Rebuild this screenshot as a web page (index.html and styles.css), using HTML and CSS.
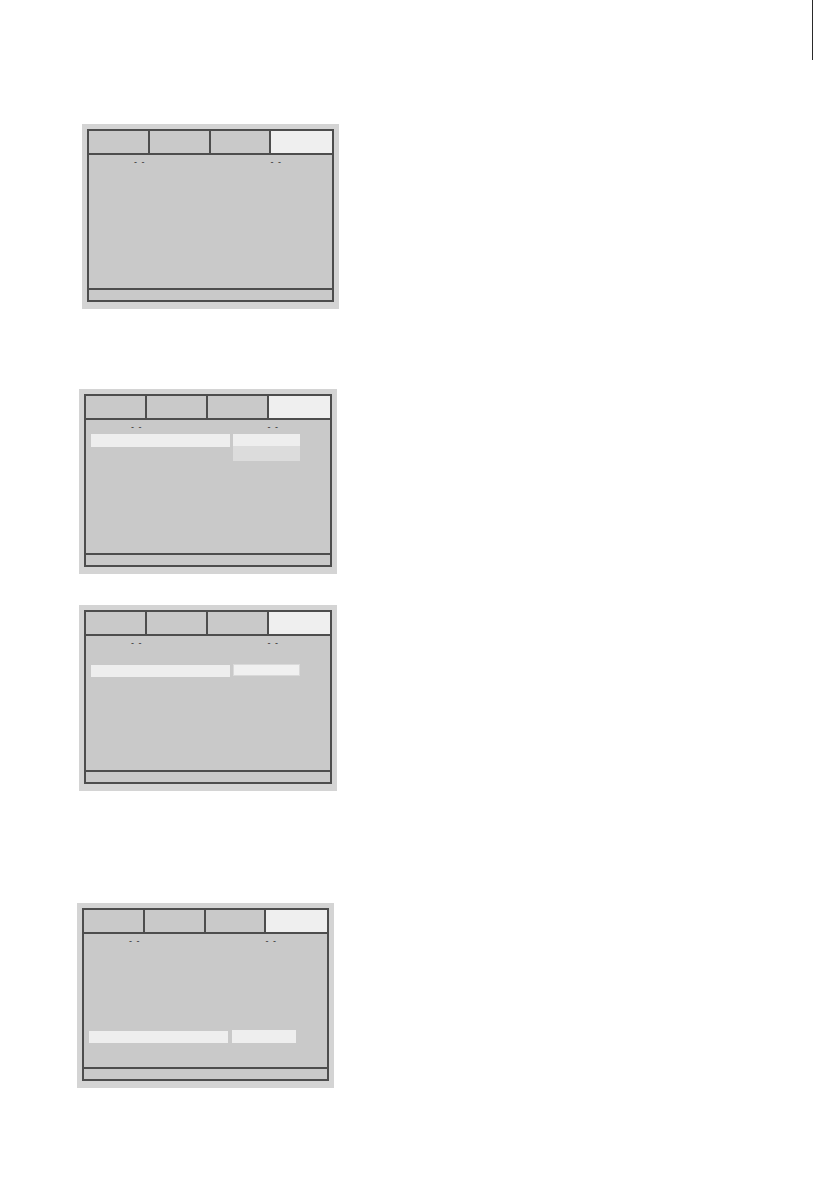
FILE: index.html
```html
<!DOCTYPE html>
<html>
<head>
<meta charset="utf-8">
<link rel="stylesheet" href="styles.css">
</head>
<body>
<div class="page">
  <div class="edge-row"><div class="edge-line"></div></div>

  <div class="screen s1">
    <div class="inner">
      <div class="tabs"><div class="tab"></div><div class="tab"></div><div class="tab"></div><div class="tab active"></div></div>
      <div class="body">
        <div class="marks"><span class="mark m1">- -</span><span class="mark m2">- -</span></div>
      </div>
      <div class="footer"></div>
    </div>
  </div>

  <div class="screen s2">
    <div class="inner">
      <div class="tabs"><div class="tab"></div><div class="tab"></div><div class="tab"></div><div class="tab active"></div></div>
      <div class="body">
        <div class="marks"><span class="mark m1">- -</span><span class="mark m2">- -</span></div>
        <div class="row r2">
          <div class="bar"></div>
          <div class="drop"><div class="opt sel"></div><div class="opt"></div></div>
        </div>
      </div>
      <div class="footer"></div>
    </div>
  </div>

  <div class="screen s3">
    <div class="inner">
      <div class="tabs"><div class="tab"></div><div class="tab"></div><div class="tab"></div><div class="tab active"></div></div>
      <div class="body">
        <div class="marks"><span class="mark m1">- -</span><span class="mark m2">- -</span></div>
        <div class="row r3">
          <div class="bar"></div>
          <div class="field outlined"></div>
        </div>
      </div>
      <div class="footer"></div>
    </div>
  </div>

  <div class="screen s4">
    <div class="inner">
      <div class="tabs"><div class="tab"></div><div class="tab"></div><div class="tab"></div><div class="tab active"></div></div>
      <div class="body">
        <div class="marks"><span class="mark m1">- -</span><span class="mark m2">- -</span></div>
        <div class="row r4">
          <div class="bar"></div>
          <div class="field tall"></div>
        </div>
      </div>
      <div class="footer"></div>
    </div>
  </div>
</div>
</body>
</html>
```

FILE: styles.css
```css
html, body {
  margin: 0;
  padding: 0;
  background: #ffffff;
  font-family: "Liberation Sans", Arial, sans-serif;
}

.page {
  width: 822px;
  display: flex;
  flex-direction: column;
}

.edge-row {
  height: 60px;
  display: flex;
  justify-content: flex-end;
}

.edge-line {
  width: 1px;
  height: 60px;
  background: #2a2a2a;
  margin-right: 9px;
}

.screen {
  box-sizing: border-box;
  width: 257px;
  height: 185px;
  padding: 5px 5px 7px 5px;
  background: #d4d4d4;
  display: flex;
}

.s1 { margin-top: 64px; margin-left: 82px; }
.s2 { margin-top: 80px; margin-left: 79px; width: 258px; }
.s3 { margin-top: 31px; margin-left: 79px; width: 258px; height: 186px; }
.s4 { margin-top: 112px; margin-left: 77px; }

.inner {
  flex: 1;
  display: flex;
  flex-direction: column;
  border: 2px solid #4d4d4d;
  background: #c9c9c9;
}

.tabs {
  display: grid;
  grid-template-columns: 1fr 1fr 1fr 1fr;
  height: 22px;
  border-bottom: 2px solid #4d4d4d;
}

.tab {
  border-right: 2px solid #4d4d4d;
  background: #c9c9c9;
}

.tab:last-child {
  border-right: none;
}

.tab.active {
  background: #efefef;
}

.body {
  flex: 1;
  display: flex;
  flex-direction: column;
  padding: 3px 0 0 5px;
}

.marks {
  height: 8px;
  display: flex;
}

.mark {
  font-size: 9px;
  line-height: 8px;
  color: #2a2a2a;
  word-spacing: 2px;
  white-space: pre;
}

.m1 { margin-left: 40px; }
.m2 { margin-left: 126px; }

.row {
  display: flex;
  align-items: flex-start;
  gap: 3px;
}

.r2 { margin-top: 3px; }
.r3 { margin-top: 18px; }
.r4 { margin-top: 86px; }

.bar {
  width: 139px;
  height: 12px;
  background: #eeeeee;
}

.r2 .bar { height: 13px; }

.drop {
  width: 67px;
  display: flex;
  flex-direction: column;
}

.opt {
  height: 15px;
  background: #dcdcdc;
}

.opt.sel {
  height: 12px;
  background: #eeeeee;
}

.field {
  width: 67px;
  height: 12px;
  background: #eeeeee;
}

.field.outlined {
  box-sizing: border-box;
  border: 1px solid #d9d9d9;
  margin-top: -1px;
  background: #f0f0f0;
}

.field.tall {
  width: 64px;
  height: 13px;
  margin-top: -1px;
  margin-left: 1px;
}

.footer {
  height: 10px;
  border-top: 2px solid #4d4d4d;
}
```
